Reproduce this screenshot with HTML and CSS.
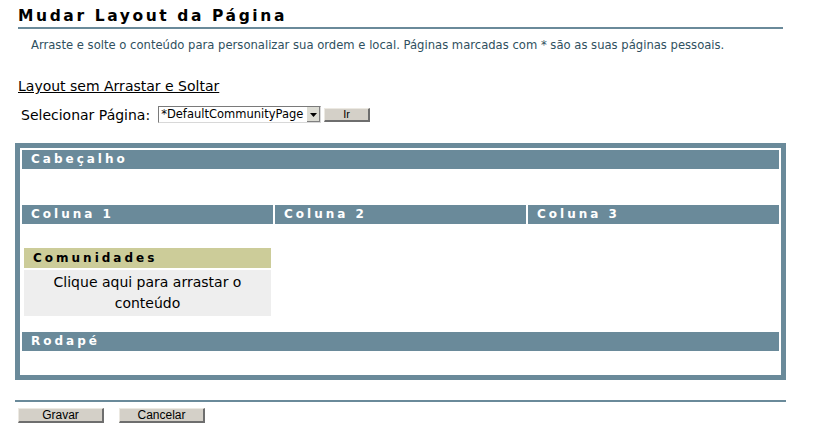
FILE: index.html
```html
<!DOCTYPE html>
<html lang="pt">
<head>
<meta charset="utf-8">
<title>Mudar Layout da Página</title>
<link rel="stylesheet" href="styles.css">
</head>
<body>
<div class="page">
  <h1 class="title">Mudar Layout da Página</h1>
  <p class="desc">Arraste e solte o conteúdo para personalizar sua ordem e local. Páginas marcadas com * são as suas páginas pessoais.</p>
  <div class="linkrow"><a class="nodrag" href="#">Layout sem Arrastar e Soltar</a></div>
  <div class="selrow">
    <span class="sellabel">Selecionar Página:</span>
    <span class="select"><span class="selval">*DefaultCommunityPage</span><span class="selarrow"><svg width="7" height="4" viewBox="0 0 7 4"><path d="M0 0h7L3.5 4z" fill="#000"/></svg></span></span>
    <span class="btn btn-ir">Ir</span>
  </div>
  <div class="layout">
    <div class="bar">Cabeçalho</div>
    <div class="zone-head"></div>
    <div class="cols">
      <div class="col">
        <div class="bar">Coluna 1</div>
        <div class="colbody">
          <div class="portlet">
            <div class="portlet-head">Comunidades</div>
            <div class="portlet-body">Clique aqui para arrastar o conteúdo</div>
          </div>
        </div>
      </div>
      <div class="col">
        <div class="bar">Coluna 2</div>
      </div>
      <div class="col">
        <div class="bar">Coluna 3</div>
      </div>
    </div>
    <div class="bar">Rodapé</div>
    <div class="zone-foot"></div>
  </div>
  <div class="actions">
    <span class="btn btn-act">Gravar</span>
    <span class="btn btn-act">Cancelar</span>
  </div>
</div>
</body>
</html>
```

FILE: styles.css
```css
html, body {
  margin: 0;
  padding: 0;
  background: #ffffff;
}
.page {
  width: 816px;
  font-family: "DejaVu Sans", Verdana, sans-serif;
  color: #000;
}
.title {
  margin: 0 33px 0 18px;
  padding-top: 7px;
  height: 20px;
  font-size: 15.5px;
  line-height: 18px;
  font-weight: bold;
  letter-spacing: 2.6px;
  border-bottom: 2px solid #6a8a9a;
  color: #000;
  white-space: nowrap;
}
.desc {
  margin: 9px 0 0 31px;
  font-size: 11.6px;
  line-height: 14px;
  color: #2f5060;
  white-space: nowrap;
}
.linkrow {
  margin: 24px 0 0 18px;
  height: 16px;
}
.nodrag {
  font-size: 14px;
  line-height: 16px;
  color: #000;
  text-decoration: underline;
}
.selrow {
  display: flex;
  align-items: center;
  margin: 13px 0 0 21px;
  height: 19px;
}
.sellabel {
  font-size: 14px;
  line-height: 16px;
  margin-right: 8px;
}
.select {
  display: flex;
  align-items: stretch;
  width: 163px;
  height: 17px;
  box-sizing: border-box;
  border: 1px solid #7a7a7a;
  border-right-color: #d8d8d8;
  border-bottom-color: #d8d8d8;
  background: #fff;
}
.selval {
  flex: 1;
  font-size: 11.5px;
  line-height: 15px;
  padding-left: 2px;
  overflow: hidden;
  white-space: nowrap;
}
.selarrow {
  width: 13px;
  display: flex;
  align-items: center;
  justify-content: center;
  background: #dcdcd4;
  border-left: 1px solid #fff;
  box-shadow: inset -1px -1px 0 #808080;
}
.btn {
  display: inline-flex;
  align-items: center;
  justify-content: center;
  background: #d4d0c8;
  border-top: 1px solid #ece9e2;
  border-left: 1px solid #ece9e2;
  border-right: 2px solid #6e6e6e;
  border-bottom: 2px solid #6e6e6e;
  font-family: "Liberation Sans", Arial, sans-serif;
  font-size: 12px;
  color: #000;
  box-sizing: border-box;
}
.btn-ir {
  margin-left: 3px;
  width: 46px;
  height: 14px;
  font-size: 11px;
}
.layout {
  margin: 19px 0 0 15px;
  width: 771px;
  box-sizing: border-box;
  border: 5px solid #6a8a9a;
  padding: 2px 2px 0 2px;
}
.bar {
  height: 19px;
  background: #6a8a9a;
  color: #fff;
  font-size: 12px;
  font-weight: bold;
  letter-spacing: 3px;
  line-height: 19px;
  padding-left: 9px;
  white-space: nowrap;
}
.zone-head {
  height: 36px;
}
.cols {
  display: grid;
  grid-template-columns: 251px 251px 251px;
  column-gap: 2px;
}
.colbody {
  padding: 24px 2px 16px 2px;
}
.portlet-head {
  height: 20px;
  background: #cccc99;
  font-size: 12px;
  font-weight: bold;
  letter-spacing: 3px;
  line-height: 20px;
  padding-left: 9px;
  color: #000;
}
.portlet-body {
  margin-top: 2px;
  height: 46px;
  background: #eeeeee;
  text-align: center;
  font-size: 14px;
  line-height: 21px;
  padding: 2px 10px 0;
  box-sizing: border-box;
}
.zone-foot {
  height: 24px;
}
.actions {
  margin: 20px 0 0 15px;
  width: 771px;
  border-top: 2px solid #6a8a9a;
  padding-top: 6px;
  display: flex;
  gap: 15px;
}
.btn-act {
  margin-left: 3px;
  width: 86px;
  height: 15px;
}
.btn-act + .btn-act {
  margin-left: 0;
}
```
